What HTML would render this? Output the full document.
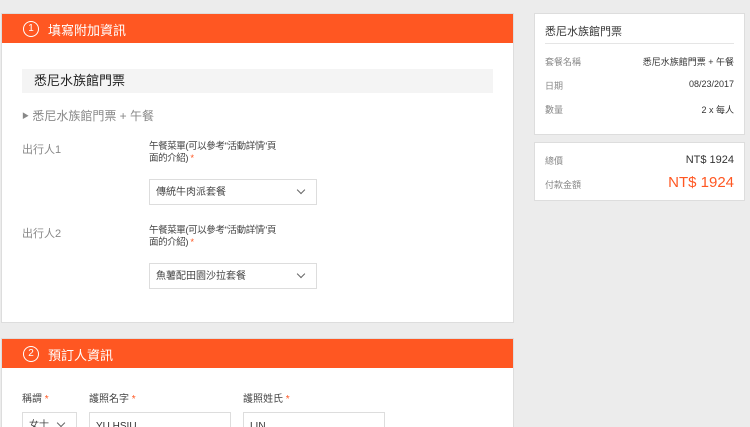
<!DOCTYPE html>
<html><head><meta charset="utf-8"><style>
*{margin:0;padding:0;box-sizing:border-box}
html,body{width:750px;height:427px;overflow:hidden}
body{background:#ececec;font-family:"Liberation Sans","Noto Sans CJK TC",sans-serif;color:#333;position:relative}
.abs{position:absolute}
.panel{position:absolute;left:1px;width:513px;background:#fff;border:1px solid #ddd}
.hdr{position:absolute;left:0;top:0;width:100%;height:29px;background:#ff5722;color:#fff;font-size:13px}
.circ{position:absolute;left:21px;top:7px;width:16px;height:16px;border:1.3px solid #fff;border-radius:50%;font-size:10px;line-height:14px;text-align:center}
.ht{position:absolute;left:46px;top:6px}
.lbl{font-size:10px;color:#444;line-height:12px}
.lbl2{font-size:9.5px;color:#444;line-height:12px;letter-spacing:-0.4px}
.sel{position:absolute;width:168px;height:26px;border:1px solid #ddd;background:#fff;font-size:10px;color:#444;padding-left:6px;line-height:26px}
.sel:after{content:"";position:absolute;right:12px;top:7px;width:5px;height:5px;border-right:1px solid #666;border-bottom:1px solid #666;transform:rotate(45deg)}
.red{color:#ff5722}
.g{color:#888}
.card{position:absolute;left:534px;width:211px;background:#fff;border:1px solid #ddd}
.row{position:absolute;left:10px;right:10px;font-size:9px}
.row span:last-child{float:right;color:#333}
</style></head><body>
<div class="panel" style="top:13px;height:310px">
 <div class="hdr"><div class="circ">1</div><div class="ht">填寫附加資訊</div></div>
 <div class="abs" style="left:20px;top:55px;width:471px;height:24px;background:#f4f4f4;font-size:13px;line-height:24px;padding-left:12px;color:#222">悉尼水族館門票</div>
 <div class="abs g" style="left:20px;top:93px;font-size:12px"><span style="font-size:7px;vertical-align:2px">▶</span> 悉尼水族館門票 + 午餐</div>
 <div class="abs g" style="left:20px;top:127px;font-size:11px">出行人1</div>
 <div class="abs lbl2" style="left:147px;top:127px;width:140px">午餐菜單(可以參考"活動詳情"頁<br>面的介紹) <span class="red">*</span></div>
 <div class="sel" style="left:147px;top:165px">傳統牛肉派套餐</div>
 <div class="abs g" style="left:20px;top:211px;font-size:11px">出行人2</div>
 <div class="abs lbl2" style="left:147px;top:211px;width:140px">午餐菜單(可以參考"活動詳情"頁<br>面的介紹) <span class="red">*</span></div>
 <div class="sel" style="left:147px;top:249px">魚薯配田園沙拉套餐</div>
</div>
<div class="panel" style="top:338px;height:100px">
 <div class="hdr"><div class="circ">2</div><div class="ht">預訂人資訊</div></div>
 <div class="abs lbl" style="left:20px;top:55px">稱謂 <span class="red">*</span></div>
 <div class="abs lbl" style="left:87px;top:55px">護照名字 <span class="red">*</span></div>
 <div class="abs lbl" style="left:241px;top:55px">護照姓氏 <span class="red">*</span></div>
 <div class="sel" style="left:20px;top:73px;width:55px">女士</div>
 <div class="abs" style="left:87px;top:73px;width:142px;height:26px;border:1px solid #ddd;font-size:10px;padding:8px 6px">YU HSIU</div>
 <div class="abs" style="left:241px;top:73px;width:142px;height:26px;border:1px solid #ddd;font-size:10px;padding:8px 6px">LIN</div>
</div>
<div class="card" style="top:13px;height:122px">
 <div class="abs" style="left:10px;top:9px;font-size:11px;color:#333">悉尼水族館門票</div>
 <div class="abs" style="left:10px;right:10px;top:29px;border-top:1px solid #e5e5e5"></div>
 <div class="row g" style="top:41px"><span>套餐名稱</span><span>悉尼水族館門票 + 午餐</span></div>
 <div class="row g" style="top:65px"><span>日期</span><span>08/23/2017</span></div>
 <div class="row g" style="top:89px"><span>數量</span><span>2 x 每人</span></div>
</div>
<div class="card" style="top:142px;height:59px">
 <div class="row g" style="top:11px"><span>總價</span><span style="font-size:11px">NT$ 1924</span></div>
 <div class="row g" style="top:31px"><span style="line-height:22px">付款金額</span><span style="font-size:15px;color:#ff5722">NT$ 1924</span></div>
</div>
</body></html>
